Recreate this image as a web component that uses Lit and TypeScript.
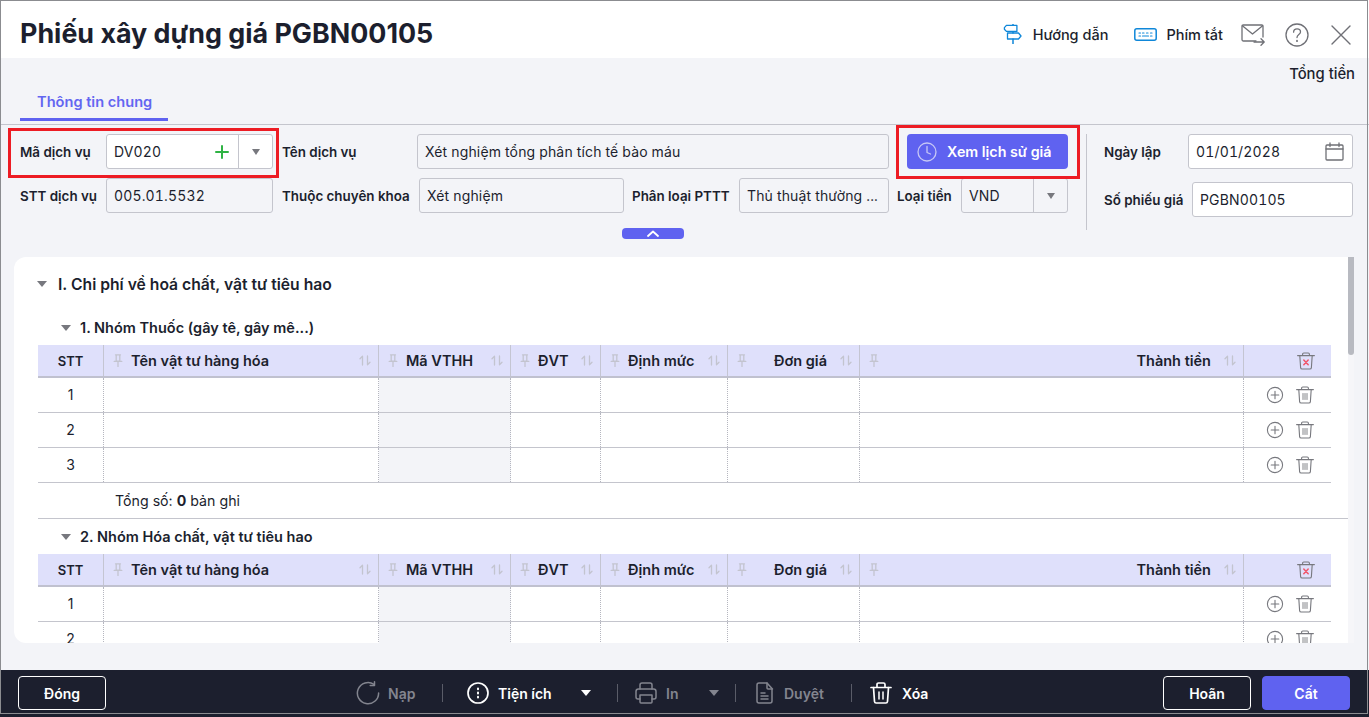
import { LitElement, html, css, svg } from 'lit';
import { customElement } from 'lit/decorators.js';

const icon = (size: number, body: unknown, w = size, vb = `0 0 ${w} ${size}`) => html`
  <svg width=${w} height=${size} viewBox=${vb} fill="none" stroke="currentColor" stroke-width="1.3"
    stroke-linecap="round" stroke-linejoin="round">${body}</svg>
`;

const trashBody = svg`
  <path d="M.6 3.600h16.800M5.600 3.600V2.200C5.600 1.500 6.100 1 6.800 1h4.400c.7 0 1.200.5 1.200 1.200v1.400" stroke-width="1.100"/>
  <path d="M2.800 3.600l.8 12c.1.9.6 1.400 1.500 1.400h7.800c.9 0 1.400-.5 1.500-1.400l.8-12" stroke-width="1.100"/>
`;

const trash = () => icon(18, svg`${trashBody}<path d="M7 7.500v6M9 7.500v6M11 7.500v6" stroke-width=".9"/>`);
const trashX = () => icon(18, svg`${trashBody}
  <path d="M6.800 8l4.400 4.800M11.200 8l-4.400 4.800" stroke="#f0566a" stroke-width="1.500"/>`);
const plusCircle = () => icon(18, svg`<circle cx="9" cy="9" r="7.600" stroke-width="1.100"/><path d="M9 5.200v7.600M5.200 9h7.600" stroke-width="1.100"/>`);
const pin = () => icon(13, svg`<path d="M2.500 .8h5M3.200 .8v6.400h3.600V.8M1.200 7.400h7.600M5 7.600V12.400"/>`, 10);
const sort = () => icon(11, svg`<path d="M3.500 10V1.200L1 3.800M8.500 1v8.800l2.500-2.600"/>`, 12);
const caret = () => html`<span class="caret"></span>`;

interface Col {
  title: string;
  width: number;
  right?: boolean;
  shaded?: boolean;
}

const COLS: Col[] = [
  { title: 'Tên vật tư hàng hóa', width: 275 },
  { title: 'Mã VTHH', width: 132, shaded: true },
  { title: 'ĐVT', width: 90 },
  { title: 'Định mức', width: 127 },
  { title: 'Đơn giá', width: 132, right: true },
  { title: 'Thành tiền', width: 384, right: true },
];

const GRID = `66px ${COLS.map((c) => c.width + 'px').join(' ')} 87px`;

@customElement('app-root')
export class AppRoot extends LitElement {
  static styles = css`
    :host {
      display: block;
      position: relative;
      width: 1369px;
      height: 717px;
      overflow: hidden;
      font-family: Inter, 'Noto Sans', sans-serif;
      color: #1c1f2e;
      background: #f3f4f8;
    }
    svg {
      display: block;
      flex: none;
    }
    .frame {
      position: absolute;
      left: 0;
      top: 0;
      width: 1366px;
      height: 712px;
      border: 1px solid #8b8c90;
      pointer-events: none;
    }
    .page {
      display: flex;
      flex-direction: column;
      height: 717px;
    }

    /* title bar */
    .top {
      height: 58px;
      flex: none;
      background: #fff;
      display: flex;
      align-items: center;
      padding: 14px 18px 6px 20px;
      box-sizing: border-box;
    }
    h1 {
      margin: 0;
      font-size: 26.850px;
      font-weight: 700;
      line-height: 34px;
      flex: 1;
    }
    .top-link {
      display: flex;
      align-items: center;
      font-size: 14.500px;
      font-weight: 500;
      color: #1c1f2e;
      margin-top: 2px;
    }
    .top-link.guide {
      gap: 10px;
      margin-right: 26px;
    }
    .top-link.keys {
      gap: 9px;
      margin-right: 18px;
    }
    .blue {
      color: #0f87d9;
    }
    .grey {
      color: #6f7076;
    }
    .mail {
      margin: 4px 20px 0 0;
    }
    .help {
      margin: 4px 22px 0 0;
    }
    .close {
      margin-top: 3px;
    }

    /* tabs */
    .tabs {
      height: 67px;
      flex: none;
      box-sizing: border-box;
      border-bottom: 1px solid #c4c5cd;
      padding: 0 14px 0 20px;
      display: flex;
      flex-direction: column;
    }
    .total {
      align-self: flex-end;
      font-size: 14.800px;
      font-weight: 500;
      line-height: 18px;
      margin: 7px 0 -1px;
    }
    .tab {
      width: 148px;
      height: 39px;
      box-sizing: border-box;
      padding: 10px 0 0 17px;
      border-bottom: 3px solid #5f62f0;
      font-size: 14.600px;
      font-weight: 600;
      line-height: 20px;
      color: #6366f1;
    }

    /* form */
    .form {
      height: 132px;
      flex: none;
      box-sizing: border-box;
      padding: 9px 16px 0 20px;
      display: flex;
    }
    .form-main {
      width: 1048px;
      display: flex;
      flex-direction: column;
    }
    .form-row {
      display: flex;
      height: 35px;
      margin-bottom: 9px;
      align-items: stretch;
    }
    .label {
      flex: none;
      font-size: 13.400px;
      font-weight: 600;
      line-height: 36px;
      white-space: nowrap;
    }
    .field {
      flex: none;
      box-sizing: border-box;
      border: 1px solid #c4c5cd;
      border-radius: 3px;
      background: #fff;
      font-size: 14px;
      letter-spacing: 0.15px;
      font-variant-numeric: tabular-nums;
      line-height: 33px;
      padding: 0 7px;
      white-space: nowrap;
      overflow: hidden;
      display: flex;
      align-items: center;
    }
    .field.off {
      background: #f3f4f8;
    }
    .field .val {
      flex: 1;
    }
    .plus {
      color: #2fb344;
      margin-right: 9px;
    }
    .drop {
      width: 33px;
      flex: none;
      align-self: stretch;
      border-left: 1px solid #c4c5cd;
      margin-right: -7px;
      display: flex;
      align-items: center;
      justify-content: center;
    }
    .caret {
      display: block;
      width: 0;
      height: 0;
      border-left: 4.500px solid transparent;
      border-right: 4.500px solid transparent;
      border-top: 6px solid #77787e;
    }
    .history {
      flex: none;
      width: 161px;
      margin-left: 18px;
      border-radius: 4px;
      background: #5f62f0;
      color: #fff;
      display: flex;
      align-items: center;
      gap: 10px;
      padding-left: 10px;
      box-sizing: border-box;
      font-size: 14.300px;
      font-weight: 600;
    }
    .history svg {
      color: #c6c7f5;
    }
    .collapse {
      align-self: flex-start;
      width: 62px;
      height: 11px;
      margin: 6px 0 0 602px;
      border-radius: 4px;
      background: #5f62f0;
      color: #fff;
      display: flex;
      align-items: center;
      justify-content: center;
    }
    .form-side {
      margin-left: 18px;
      height: 96px;
      border-left: 1px solid #c4c5cd;
      padding-left: 17px;
      display: flex;
      flex-direction: column;
      gap: 13px;
    }
    .side-row {
      display: flex;
      height: 35px;
    }

    /* card with the cost tables */
    .card {
      margin-left: 14px;
      width: 1340px;
      height: 386px;
      flex: none;
      display: flex;
      border-radius: 12px 0 0 12px;
      overflow: hidden;
    }
    .scroll-pane {
      width: 1334px;
      flex: none;
      background: #fff;
      overflow: hidden;
      padding: 10px 0 0 24px;
      box-sizing: border-box;
    }
    .scrollbar {
      width: 6px;
      flex: none;
      background: #f6f6f9;
    }
    .thumb {
      height: 98px;
      background: #b8bac1;
      border-radius: 0 0 3px 3px;
    }
    .section {
      display: flex;
      align-items: center;
      height: 34px;
      margin-bottom: 9px;
      font-size: 15.700px;
      font-weight: 600;
      gap: 11px;
    }
    .section .caret,
    .group-head .caret {
      margin-left: -1px;
      border-left-width: 5px;
      border-right-width: 5px;
      border-top-width: 6.500px;
    }
    .group-head {
      display: flex;
      align-items: center;
      height: 35px;
      padding-left: 24px;
      gap: 9px;
      font-size: 14.500px;
      font-weight: 600;
    }
    .tbl {
      width: 1293px;
      font-size: 13px;
    }
    .tr {
      display: grid;
      height: 35px;
      box-sizing: border-box;
      border-bottom: 1px solid #c4c5cd;
    }
    .tr.head {
      height: 33px;
      background: #dfe0fb;
      border-bottom: 2px solid #c0c1cf;
      font-weight: 600;
    }
    .td {
      display: flex;
      align-items: center;
      box-sizing: border-box;
      border-right: 1px dotted #b5b6bf;
      min-width: 0;
    }
    .td:last-child {
      border-right: 0;
    }
    .head .td {
      border-right: 1px solid #c4c5d2;
      padding: 0 7px 0 9px;
    }
    .head .td:last-child {
      border-right: 0;
    }
    .td.stt {
      justify-content: center;
      font-size: 14px;
      padding: 0 0 1px;
    }
    .head .td.stt {
      font-size: 13px;
      padding: 0;
    }
    .td.shaded {
      background: #f3f4f8;
    }
    .head .td svg {
      color: #c3c4cf;
    }
    .title {
      flex: 1;
      margin: 0 8px 0 8px;
      white-space: nowrap;
      font-size: 14.500px;
    }
    .title.right {
      text-align: right;
      margin-right: 13px;
    }
    .td.act {
      padding-left: 22px;
      gap: 12px;
      color: #77787e;
    }
    .head .td.act {
      padding: 0 0 0 53px;
    }
    .head .td.act svg {
      color: #77787e;
    }
    .tbl-foot {
      height: 36px;
      box-sizing: border-box;
      border-bottom: 1px solid #c4c5cd;
      padding-left: 77px;
      line-height: 36px;
      font-size: 14.200px;
    }

    /* bottom toolbar */
    .bar {
      margin-top: 27px;
      flex: none;
      height: 47px;
      box-sizing: border-box;
      padding: 6px 19px 6px 18px;
      background: #1c1f2e;
      color: #fff;
      display: flex;
      align-items: flex-start;
      font-size: 14px;
      font-weight: 600;
    }
    .btn {
      width: 88px;
      height: 34px;
      box-sizing: border-box;
      border: 1px solid #fff;
      border-radius: 4px;
      display: flex;
      align-items: center;
      justify-content: center;
    }
    .btn.primary {
      background: #5f62f0;
      border-color: #5f62f0;
      margin-left: 11px;
    }
    .tools {
      display: flex;
      align-items: center;
      height: 34px;
      margin-left: 250px;
      margin-right: auto;
    }
    .tool {
      display: flex;
      align-items: center;
    }
    .muted {
      color: #83858f;
    }
    .sep {
      width: 1px;
      height: 18px;
      background: #5a5c68;
      flex: none;
    }
    .bar .caret {
      border-top-color: #fff;
      border-left-width: 5px;
      border-right-width: 5px;
    }
    .bar .muted .caret {
      border-top-color: #83858f;
    }

    /* red marks drawn on the screenshot */
    .mark {
      position: absolute;
      box-sizing: border-box;
      border: 3px solid #ed1c24;
      pointer-events: none;
    }
    .mark.code {
      left: 8px;
      top: 128px;
      width: 271px;
      height: 50px;
    }
    .mark.hist {
      left: 896px;
      top: 125px;
      width: 184px;
      height: 54px;
    }
  `;

  private combo(value: string, width: number, plus: boolean, off: boolean) {
    return html`
      <div class="field ${off ? 'off' : ''}" style="width:${width}px">
        <span class="val">${value}</span>
        ${plus
          ? html`<span class="plus">${icon(14, svg`<path d="M7 1v12M1 7h12" stroke-width="2"/>`)}</span>`
          : ''}
        <span class="drop">${caret()}</span>
      </div>
    `;
  }

  private field(value: string, width: number, off = true) {
    return html`<div class="field ${off ? 'off' : ''}" style="width:${width}px">${value}</div>`;
  }

  private label(text: string, width: number) {
    return html`<div class="label" style="width:${width}px">${text}</div>`;
  }

  private table(rows: string[]) {
    return html`
      <div class="tbl">
        <div class="tr head" style="grid-template-columns:${GRID}">
          <div class="td stt">STT</div>
          ${COLS.map(
            (c) => html`
              <div class="td">
                ${pin()}
                <span class="title ${c.right ? 'right' : ''}">${c.title}</span>
                ${sort()}
              </div>
            `,
          )}
          <div class="td act">${trashX()}</div>
        </div>
        ${rows.map(
          (n) => html`
            <div class="tr" style="grid-template-columns:${GRID}">
              <div class="td stt">${n}</div>
              ${COLS.map((c) => html`<div class="td ${c.shaded ? 'shaded' : ''}"></div>`)}
              <div class="td act">${plusCircle()}${trash()}</div>
            </div>
          `,
        )}
      </div>
    `;
  }

  render() {
    return html`
      <div class="page">
        <header class="top">
          <h1>Phiếu xây dựng giá PGBN00105</h1>
          <div class="top-link guide">
            <span class="blue">${icon(20, svg`
              <path d="M2 3.200l2-2.200h10.500v6H4L2 4.800z" transform="translate(-.6 .4)"/>
              <path d="M4.500 9h11l2.500 3-2.500 3h-11z"/>
              <path d="M10 1V0M10 8v1M10 15v5" stroke-width="1.500"/>
            `)}</span>
            Hướng dẫn
          </div>
          <div class="top-link keys">
            <span class="blue">${icon(13, svg`
              <rect x=".8" y=".8" width="21.400" height="11.400" rx="2" stroke-width="1.500"/>
              <path d="M5 5h1.500M8.500 5H10M12.500 5H14M16.500 5H18M5 8h1.500M8.500 8h6M16.500 8H18" stroke-width="1.200"/>
            `, 23)}</span>
            Phím tắt
          </div>
          <span class="grey mail">${icon(22, svg`
            <path d="M15 17H2.400C1.600 17 1 16.400 1 15.600V2C1 1.400 1.500 1 2.200 1h18.600C21.500 1 22 1.400 22 2v11"/>
            <path d="M1.400 1.800l10.100 8.200 10.100-8.200"/>
            <path d="M13 18h10M20 14.800l3.200 3.200-3.200 3.200"/>
          `, 24)}</span>
          <span class="grey help">${icon(24, svg`
            <circle cx="12" cy="12" r="11"/>
            <path d="M8.600 9.200c0-2 1.500-3.400 3.500-3.400s3.400 1.300 3.400 3.100c0 2.700-3.500 2.600-3.500 5.600"/>
            <path d="M12 17.600v.6" stroke-width="1.700"/>
          `)}</span>
          <span class="grey close">${icon(20, svg`<path d="M1 1l18 18M19 1L1 19" stroke-width="1.400"/>`)}</span>
        </header>

        <div class="tabs">
          <div class="total">Tổng tiền</div>
          <div class="tab">Thông tin chung</div>
        </div>

        <div class="form">
          <div class="form-main">
            <div class="form-row">
              ${this.label('Mã dịch vụ', 86)}
              ${this.combo('DV020', 167, true, false)}
              <div style="width:9px"></div>
              ${this.label('Tên dịch vụ', 135)}
              ${this.field('Xét nghiệm tổng phân tích tế bào máu', 472)}
              <div class="history">
                ${icon(20, svg`<circle cx="10" cy="10" r="9"/><path d="M10 4.500V10.500l3.500 1.500"/>`)}
                Xem lịch sử giá
              </div>
            </div>
            <div class="form-row">
              ${this.label('STT dịch vụ', 86)}
              ${this.field('005.01.5532', 167)}
              <div style="width:9px"></div>
              ${this.label('Thuộc chuyên khoa', 137)}
              ${this.field('Xét nghiệm', 205)}
              <div style="width:8px"></div>
              ${this.label('Phân loại PTTT', 107)}
              ${this.field('Thủ thuật thường ...', 150)}
              <div style="width:8px"></div>
              ${this.label('Loại tiền', 64)}
              ${this.combo('VND', 107, false, true)}
            </div>
            <div class="collapse">${icon(7, svg`<path d="M1 6l5-4.500 5 4.500" stroke-width="1.800"/>`, 12)}</div>
          </div>
          <div class="form-side">
            <div class="side-row">
              ${this.label('Ngày lập', 84)}
              <div class="field" style="width:165px">
                <span class="val">01/01/2028</span>
                <span class="grey" style="margin-right:1px">${icon(19, svg`
                  <rect x="1" y="3" width="17" height="15" rx="1"/>
                  <path d="M1 7h17M5 1v3.500M14 1v3.500"/>
                `)}</span>
              </div>
            </div>
            <div class="side-row">
              ${this.label('Số phiếu giá', 88)}
              ${this.field('PGBN00105', 161, false)}
            </div>
          </div>
        </div>

        <div class="card">
          <div class="scroll-pane">
            <div class="section">${caret()}I. Chi phí về hoá chất, vật tư tiêu hao</div>
            <div class="group-head">${caret()}1. Nhóm Thuốc (gây tê, gây mê...)</div>
            ${this.table(['1', '2', '3'])}
            <div class="tbl-foot">Tổng số: <b>0</b> bản ghi</div>
            <div class="group-head">${caret()}2. Nhóm Hóa chất, vật tư tiêu hao</div>
            ${this.table(['1', '2'])}
          </div>
          <div class="scrollbar"><div class="thumb"></div></div>
        </div>

        <footer class="bar">
          <div class="btn">Đóng</div>
          <div class="tools">
            <div class="tool muted" style="gap:8px;width:86px">
              ${icon(24, svg`
                <path d="M18 3.400A10.600 10.600 0 1 0 22.600 12" stroke-width="1.500"/>
                <path d="M18.500 .8v3.800h-4.300" stroke-width="1.500"/>
              `)}
              Nạp
            </div>
            <div class="sep"></div>
            <div class="tool" style="gap:9px;margin-left:24px;width:150px">
              ${icon(22, svg`
                <circle cx="11" cy="11" r="10" stroke-width="1.700"/>
                <path d="M11 6.500v.8M11 10.600v.8M11 14.700v.8" stroke-width="2"/>
              `)}
              Tiện ích
              <span style="margin-left:20px">${caret()}</span>
            </div>
            <div class="sep"></div>
            <div class="tool muted" style="margin-left:17px;gap:9px;width:100px">
              ${icon(22, svg`
                <path d="M5 7V3c0-1.200.8-2 2-2h8c1.200 0 2 .8 2 2v4" stroke-width="1.500"/>
                <path d="M5 17H3c-1.200 0-2-.8-2-2V9.500C1 8 2 7 3.500 7h15C20 7 21 8 21 9.500V15c0 1.200-.8 2-2 2h-2" stroke-width="1.500"/>
                <path d="M5 13h12v7c0 .6-.4 1-1 1H6c-.6 0-1-.4-1-1z" stroke-width="1.500"/>
              `)}
              In
              <span style="margin-left:22px">${caret()}</span>
            </div>
            <div class="sep"></div>
            <div class="tool muted" style="margin-left:19px;gap:10px;width:96px">
              ${icon(22, svg`
                <path d="M11 1H3C1.800 1 1 1.800 1 3v16c0 1.200.8 2 2 2h11c1.200 0 2-.8 2-2V6.500z" stroke-width="1.500" transform="translate(1 0)"/>
                <path d="M12 1v5c0 .6.4 1 1 1h4.500M6 11h4M6 14h7M6 17h7" stroke-width="1.500"/>
              `, 19)}
              Duyệt
            </div>
            <div class="sep"></div>
            <div class="tool" style="margin-left:18px;gap:10px">
              ${icon(22, svg`
                <path d="M1 5.500h20M7 5.500V2.500C7 1.600 7.600 1 8.500 1h5c.9 0 1.500.6 1.500 1.500v3" stroke-width="1.700"/>
                <path d="M3.500 5.500l1 14c.1.9.7 1.500 1.600 1.500h9.800c.9 0 1.500-.6 1.600-1.500l1-14" stroke-width="1.700"/>
                <path d="M9 10v7M13 10v7" stroke-width="1.500"/>
              `)}
              Xóa
            </div>
          </div>
          <div class="btn">Hoãn</div>
          <div class="btn primary">Cất</div>
        </footer>
      </div>
      <div class="frame"></div>
      <div class="mark code"></div>
      <div class="mark hist"></div>
    `;
  }
}
